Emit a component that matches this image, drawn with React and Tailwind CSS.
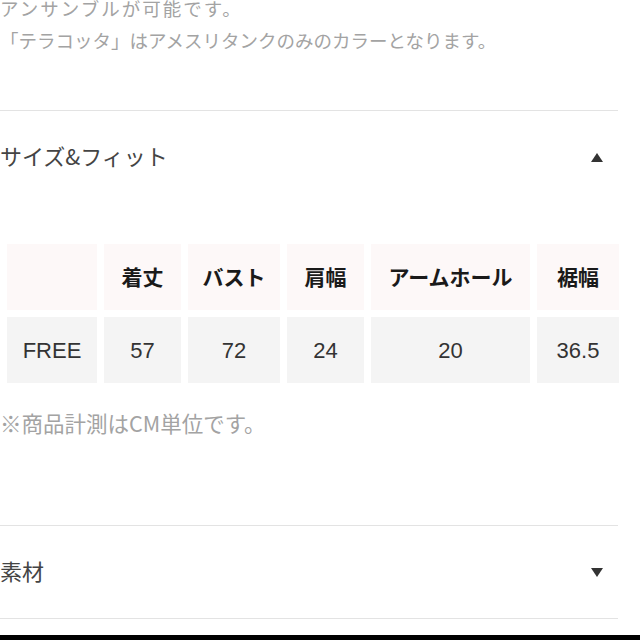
export default function App() {
  const heads = ["", "着丈", "バスト", "肩幅", "アームホール", "裾幅"];
  const vals = ["FREE", "57", "72", "24", "20", "36.5"];
  const widths = ["w-[90px]", "w-[77px]", "w-[92px]", "w-[77px]", "w-[159px]", "w-[82px]"];

  return (
    <div className="w-[640px] h-[640px] overflow-hidden bg-white font-['Noto_Sans_CJK_JP','Noto_Sans',sans-serif]">
      {/* description */}
      <div className="-mt-[8px] text-[18.5px] leading-[32px] text-[#a3a3a3]">
        <p className="tracking-[2px]">アンサンブルが可能です。</p>
        <p>「テラコッタ」はアメスリタンクのみのカラーとなります。</p>
      </div>

      <div className="mt-[54px] w-[618px] h-px bg-[#e3e3e3]" />

      {/* size & fit header */}
      <div className="w-[618px] h-[92px] flex items-center justify-between">
        <span className="mb-[4px] text-[22px] text-[#444]">サイズ&amp;フィット</span>
        <span className="mr-[15px] w-0 h-0 border-x-[6px] border-x-transparent border-b-[9px] border-b-[#333]" />
      </div>

      <table className="mt-[34px] w-[626px] border-separate border-spacing-[7px]">
        <tbody>
          <tr>
            {heads.map((h, i) => (
              <th
                key={i}
                className={`${widths[i]} h-[66px] p-0 bg-[#fdf8f8] text-center font-bold text-[21px] text-[#1a1a1a]`}
              >
                {h}
              </th>
            ))}
          </tr>
          <tr>
            {vals.map((v, i) => (
              <td
                key={i}
                className={`${widths[i]} h-[66px] p-0 bg-[#f4f4f4] text-center text-[22px] text-[#333] font-['Liberation_Sans',sans-serif]`}
              >
                {v}
              </td>
            ))}
          </tr>
        </tbody>
      </table>

      <p className="mt-[17px] text-[21.5px] leading-[32px] text-[#a3a3a3]">※商品計測はCM単位です。</p>

      <div className="mt-[86px] w-[618px] h-px bg-[#e3e3e3]" />

      {/* material */}
      <div className="w-[618px] h-[92px] flex items-center justify-between">
        <span className="mb-[4px] text-[22px] text-[#444]">素材</span>
        <span className="mr-[15px] w-0 h-0 border-x-[6px] border-x-transparent border-t-[9px] border-t-[#333]" />
      </div>

      <div className="w-[618px] h-px bg-[#e3e3e3]" />

      <div className="mt-[16px] h-[10px] bg-black" />
    </div>
  );
}
